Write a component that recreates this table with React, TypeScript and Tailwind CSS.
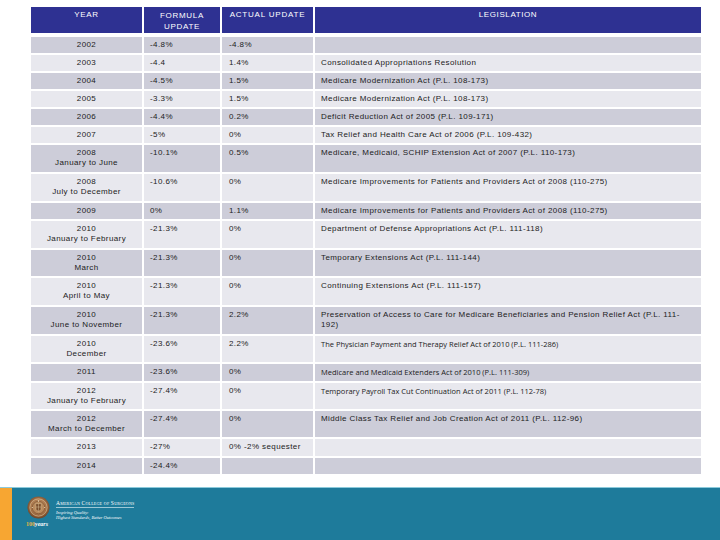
import React from "react";

type Row = {
  year: string[];
  formula: string;
  actual: string;
  leg: React.ReactNode;
  alt?: boolean;
  h: string;
};

const rows: Row[] = [
  { year: ["2002"], formula: "-4.8%", actual: "-4.8%", leg: "", h: "h-[16px]" },
  { year: ["2003"], formula: "-4.4", actual: "1.4%", leg: "Consolidated Appropriations Resolution", h: "h-[16px]" },
  { year: ["2004"], formula: "-4.5%", actual: "1.5%", leg: "Medicare Modernization Act (P.L. 108-173)", h: "h-[16px]" },
  { year: ["2005"], formula: "-3.3%", actual: "1.5%", leg: "Medicare Modernization Act (P.L. 108-173)", h: "h-[16px]" },
  { year: ["2006"], formula: "-4.4%", actual: "0.2%", leg: "Deficit Reduction Act of 2005 (P.L. 109-171)", h: "h-[16px]" },
  { year: ["2007"], formula: "-5%", actual: "0%", leg: "Tax Relief and Health Care Act of 2006 (P.L. 109-432)", h: "h-[16px]" },
  { year: ["2008", "January to June"], formula: "-10.1%", actual: "0.5%", leg: "Medicare, Medicaid, SCHIP Extension Act of 2007 (P.L. 110-173)", h: "h-[27px]" },
  { year: ["2008", "July to December"], formula: "-10.6%", actual: "0%", leg: "Medicare Improvements for Patients and Providers Act of 2008 (110-275)", h: "h-[27px]" },
  { year: ["2009"], formula: "0%", actual: "1.1%", leg: "Medicare Improvements for Patients and Providers Act of 2008 (110-275)", h: "h-[16px]" },
  { year: ["2010", "January to February"], formula: "-21.3%", actual: "0%", leg: "Department of Defense Appropriations Act (P.L. 111-118)", h: "h-[27px]" },
  { year: ["2010", "March"], formula: "-21.3%", actual: "0%", leg: "Temporary Extensions Act (P.L. 111-144)", h: "h-[26px]" },
  { year: ["2010", "April to May"], formula: "-21.3%", actual: "0%", leg: "Continuing Extensions Act (P.L. 111-157)", h: "h-[27px]" },
  {
    year: ["2010", "June to November"],
    formula: "-21.3%",
    actual: "2.2%",
    leg: (
      <>
        Preservation of Access to Care for Medicare Beneficiaries and Pension Relief Act (P.L. 111-
        <br />
        192)
      </>
    ),
    h: "h-[27px]",
  },
  { year: ["2010", "December"], formula: "-23.6%", actual: "2.2%", leg: "The Physician Payment and Therapy Relief Act of 2010 (P.L. 111-286)", alt: true, h: "h-[26px]" },
  { year: ["2011"], formula: "-23.6%", actual: "0%", leg: "Medicare and Medicaid Extenders Act of 2010 (P.L. 111-309)", alt: true, h: "h-[17px]" },
  { year: ["2012", "January to February"], formula: "-27.4%", actual: "0%", leg: "Temporary Payroll Tax Cut Continuation Act of 2011 (P.L. 112-78)", alt: true, h: "h-[26px]" },
  { year: ["2012", "March to December"], formula: "-27.4%", actual: "0%", leg: "Middle Class Tax Relief and Job Creation Act of 2011 (P.L. 112-96)", h: "h-[26px]" },
  { year: ["2013"], formula: "-27%", actual: "0% -2% sequester", leg: "", h: "h-[17px]" },
  { year: ["2014"], formula: "-24.4%", actual: "", leg: "", h: "h-[16px]" },
];

const cols = "grid grid-cols-[111px_76px_91px_386px] gap-x-[2px]";

function Seal() {
  return (
    <svg width="23" height="23" viewBox="0 0 24 24">
      <defs>
        <radialGradient id="sg" cx="50%" cy="45%" r="55%">
          <stop offset="0%" stopColor="#d8b48a" />
          <stop offset="60%" stopColor="#a9754a" />
          <stop offset="100%" stopColor="#6e4426" />
        </radialGradient>
      </defs>
      <circle cx="12" cy="12" r="11.5" fill="url(#sg)" />
      <circle cx="12" cy="12" r="9" fill="none" stroke="#e9cfa4" strokeWidth="0.6" />
      <circle cx="12" cy="12" r="6.5" fill="#b98a5c" stroke="#5e3a20" strokeWidth="0.5" />
      <path d="M9 8 L15 8 L14.5 14 L12 16.5 L9.5 14 Z" fill="#7a4e2c" stroke="#f0d9b0" strokeWidth="0.4" />
      <path d="M12 8 V16 M9.3 11.5 H14.7" stroke="#f0d9b0" strokeWidth="0.4" />
      <circle cx="12" cy="5.2" r="0.7" fill="#f3e2c0" />
      <circle cx="5.5" cy="12" r="0.6" fill="#f3e2c0" />
      <circle cx="18.5" cy="12" r="0.6" fill="#f3e2c0" />
    </svg>
  );
}

export default function App() {
  const font = { fontFamily: '"Liberation Sans", Arial, sans-serif' } as React.CSSProperties;
  return (
    <div className="w-[720px] h-[540px] bg-white flex flex-col overflow-hidden text-[#1c1c1c]" style={font}>
      <div className="pt-[7px] pl-[31px] flex-1">
        <div className={`${cols} mb-[4px]`}>
          <div className="h-[26px] bg-[#2e3192] text-white text-[8px] leading-[10px] tracking-[0.7px] text-center pt-[3px]">YEAR</div>
          <div className="h-[26px] bg-[#2e3192] text-white text-[8px] leading-[11px] tracking-[0.7px] text-center pt-[3px]">
            FORMULA
            <br />
            UPDATE
          </div>
          <div className="h-[26px] bg-[#2e3192] text-white text-[8px] leading-[10px] tracking-[0.8px] text-center pt-[3px]">ACTUAL UPDATE</div>
          <div className="h-[26px] bg-[#2e3192] text-white text-[8px] leading-[10px] tracking-[0.6px] text-center pt-[3px]">LEGISLATION</div>
        </div>
        <div className="flex flex-col gap-y-[2px]">
          {rows.map((r, i) => {
            const bg = i % 2 === 0 ? "bg-[#cdcdd9]" : "bg-[#e8e8ee]";
            const cell = `${bg} ${r.h} text-[8px] leading-[10px] tracking-[0.4px] pt-[3px] whitespace-nowrap`;
            return (
              <div key={i} className={cols}>
                <div className={`${cell} text-center`}>
                  {r.year.map((y, j) => (
                    <div key={j}>{y}</div>
                  ))}
                </div>
                <div className={`${cell} pl-[6px]`}>{r.formula}</div>
                <div className={`${cell} pl-[7px]`}>{r.actual}</div>
                <div className={`${cell} pl-[6px]`}>
                  {r.alt ? (
                    <span className="text-[7.5px] tracking-[0px]" style={{ fontFamily: '"Open Sans", "Liberation Sans", sans-serif' }}>
                      {r.leg}
                    </span>
                  ) : (
                    r.leg
                  )}
                </div>
              </div>
            );
          })}
        </div>
      </div>
      <div className="h-[53px] bg-[#1e7b9b] border-t border-[#8ccadb] flex">
        <div className="w-[12px] bg-[#f7a632]" />
        <div className="pl-[15px] pt-[7px] flex flex-col">
          <div className="flex items-start gap-[6px]">
            <div className="pt-[1px]">
              <Seal />
            </div>
            <div className="flex flex-col pt-[5px] text-white" style={{ fontFamily: '"Liberation Serif", serif' }}>
              <div className="text-[5.5px] leading-[6px] tracking-[0.2px] border-b border-[#9cc8d6] pb-[1px]" style={{ fontVariant: "small-caps" }}>
                American College of Surgeons
              </div>
              <div className="text-[4.5px] leading-[5px] italic mt-[2px]">Inspiring Quality:</div>
              <div className="text-[4.5px] leading-[5px] italic">Highest Standards, Better Outcomes</div>
            </div>
          </div>
          <div className="text-[6px] leading-[7px] font-bold mt-[1px] -ml-[1px]" style={{ fontFamily: '"Liberation Serif", serif' }}>
            <span className="text-[#e2b548]">100</span>
            <span className="text-white italic">years</span>
          </div>
        </div>
      </div>
    </div>
  );
}
